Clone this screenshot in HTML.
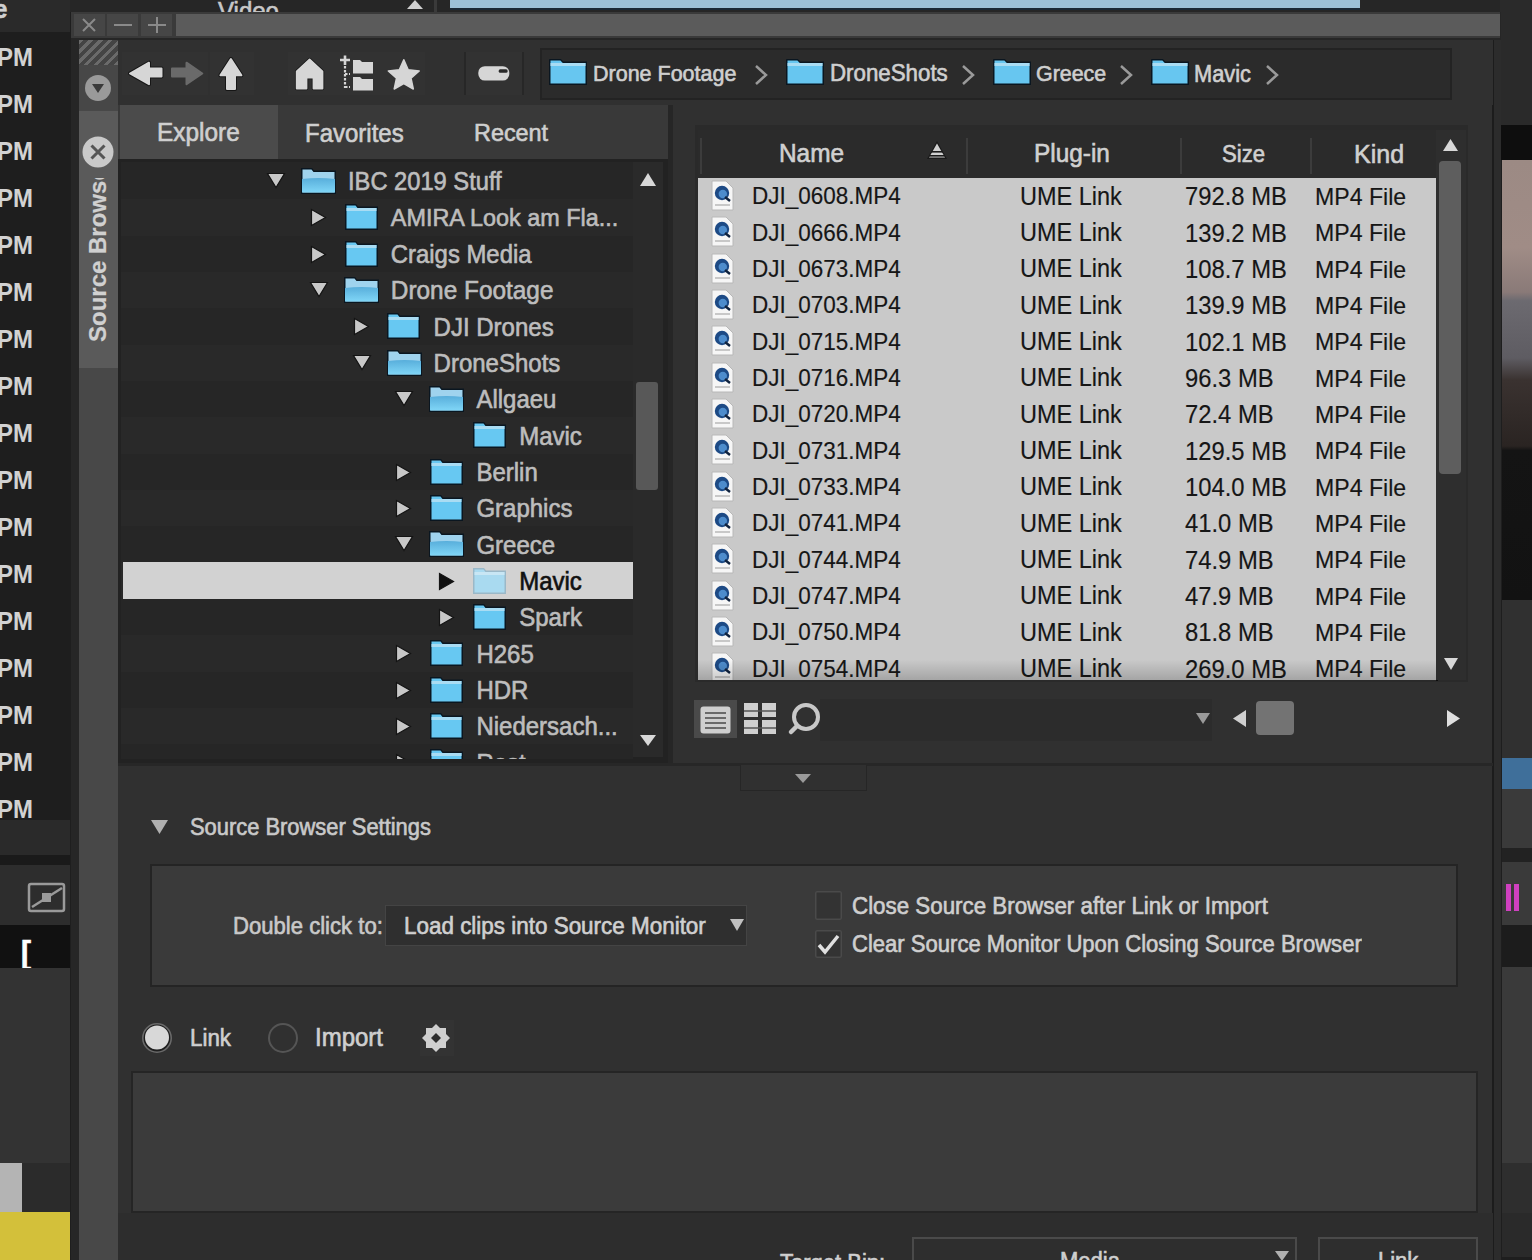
<!DOCTYPE html>
<html><head><meta charset="utf-8"><style>
html,body{margin:0;padding:0;width:1532px;height:1260px;overflow:hidden;background:#1e1e1e}
body{position:relative;font-family:"Liberation Sans",sans-serif}
div{position:absolute}
.t{white-space:nowrap;line-height:1;-webkit-text-stroke:0.6px currentColor;transform:scaleY(1.06);transform-origin:0 84.65%}
.d{-webkit-text-stroke:0.15px currentColor}
</style></head><body>
<div style="left:0px;top:0px;width:1532px;height:1260px;background:#1e1e1e"></div>
<div style="left:0px;top:0px;width:1532px;height:12px;background:#262626"></div>
<div style="left:0px;top:0px;width:70px;height:32px;background:#2a2a2a"></div>
<div class="t " style="left:-6px;top:-2.32px;font-size:24px;color:#d0d0d0;font-weight:bold">e</div>
<div class="t " style="left:-3px;top:46.48px;font-size:24px;color:#d2d2d2;font-weight:bold;-webkit-text-stroke:0">PM</div>
<div class="t " style="left:-3px;top:93.48px;font-size:24px;color:#d2d2d2;font-weight:bold;-webkit-text-stroke:0">PM</div>
<div class="t " style="left:-3px;top:140.48px;font-size:24px;color:#d2d2d2;font-weight:bold;-webkit-text-stroke:0">PM</div>
<div class="t " style="left:-3px;top:187.48px;font-size:24px;color:#d2d2d2;font-weight:bold;-webkit-text-stroke:0">PM</div>
<div class="t " style="left:-3px;top:234.48px;font-size:24px;color:#d2d2d2;font-weight:bold;-webkit-text-stroke:0">PM</div>
<div class="t " style="left:-3px;top:281.48px;font-size:24px;color:#d2d2d2;font-weight:bold;-webkit-text-stroke:0">PM</div>
<div class="t " style="left:-3px;top:328.48px;font-size:24px;color:#d2d2d2;font-weight:bold;-webkit-text-stroke:0">PM</div>
<div class="t " style="left:-3px;top:375.48px;font-size:24px;color:#d2d2d2;font-weight:bold;-webkit-text-stroke:0">PM</div>
<div class="t " style="left:-3px;top:422.48px;font-size:24px;color:#d2d2d2;font-weight:bold;-webkit-text-stroke:0">PM</div>
<div class="t " style="left:-3px;top:469.48px;font-size:24px;color:#d2d2d2;font-weight:bold;-webkit-text-stroke:0">PM</div>
<div class="t " style="left:-3px;top:516.48px;font-size:24px;color:#d2d2d2;font-weight:bold;-webkit-text-stroke:0">PM</div>
<div class="t " style="left:-3px;top:563.48px;font-size:24px;color:#d2d2d2;font-weight:bold;-webkit-text-stroke:0">PM</div>
<div class="t " style="left:-3px;top:610.48px;font-size:24px;color:#d2d2d2;font-weight:bold;-webkit-text-stroke:0">PM</div>
<div class="t " style="left:-3px;top:657.48px;font-size:24px;color:#d2d2d2;font-weight:bold;-webkit-text-stroke:0">PM</div>
<div class="t " style="left:-3px;top:704.48px;font-size:24px;color:#d2d2d2;font-weight:bold;-webkit-text-stroke:0">PM</div>
<div class="t " style="left:-3px;top:751.48px;font-size:24px;color:#d2d2d2;font-weight:bold;-webkit-text-stroke:0">PM</div>
<div class="t " style="left:-3px;top:798.48px;font-size:24px;color:#d2d2d2;font-weight:bold;-webkit-text-stroke:0">PM</div>
<div style="left:0px;top:820px;width:70px;height:35px;background:#2a2a2a"></div>
<div style="left:0px;top:855px;width:70px;height:10px;background:#1a1a1a"></div>
<div style="left:0px;top:865px;width:70px;height:60px;background:#2d2d2d"></div>
<div style="left:0px;top:925px;width:70px;height:43px;background:#111111"></div>
<div class="t " style="left:21px;top:937.61px;font-size:30px;color:#ffffff;font-weight:bold">[</div>
<div style="left:0px;top:968px;width:70px;height:195px;background:#333333"></div>
<div style="left:0px;top:1163px;width:70px;height:50px;background:#2b2b2b"></div>
<div style="left:0px;top:1163px;width:22px;height:49px;background:#b4b4b4"></div>
<div style="left:0px;top:1212px;width:70px;height:48px;background:#d3c03a"></div>
<svg style="position:absolute;left:26px;top:880px;" width="42" height="36" viewBox="0 0 42 36"><rect x="3" y="4" width="35" height="27" rx="2" fill="none" stroke="#9a9a9a" stroke-width="2.5"/><line x1="6" y1="27" x2="36" y2="8" stroke="#9a9a9a" stroke-width="2.5"/><rect x="16" y="13" width="9" height="9" fill="#9a9a9a"/></svg>
<div class="t " style="left:218px;top:-0.32px;font-size:24px;color:#c8c8c8;">Video</div>
<svg style="position:absolute;left:406px;top:0px;" width="18" height="10" viewBox="0 0 18 10"><polygon points="1,9 17,9 9,0" fill="#d0d0d0"/></svg>
<div style="left:434px;top:0px;width:3px;height:12px;background:#3a3a3a"></div>
<div style="left:450px;top:0px;width:910px;height:10px;background:#9cc2d6;box-shadow:inset 0 -2px 0 #1a2a34"></div>
<div style="left:1500px;top:0px;width:32px;height:125px;background:#2a2a2a"></div>
<div style="left:1500px;top:125px;width:32px;height:35px;background:#0e0e0e"></div>
<div style="left:1502px;top:160px;width:30px;height:440px;background:linear-gradient(#9c8a84 0%,#a08c86 20%,#8a7a78 30%,#6c6a70 32%,#5e5c62 45%,#3a3230 50%,#2a2422 65%,#141414 66%,#121212 100%)"></div>
<div style="left:1502px;top:600px;width:30px;height:158px;background:#303030"></div>
<div style="left:1502px;top:758px;width:30px;height:31px;background:#3f6f9a"></div>
<div style="left:1502px;top:789px;width:30px;height:59px;background:#3a3a3a"></div>
<div style="left:1502px;top:848px;width:30px;height:14px;background:#222"></div>
<div style="left:1502px;top:862px;width:30px;height:63px;background:#3a3a3a"></div>
<div style="left:1506px;top:884px;width:5px;height:27px;background:#d040c0"></div>
<div style="left:1514px;top:884px;width:5px;height:27px;background:#d040c0"></div>
<div style="left:1502px;top:925px;width:30px;height:42px;background:#1c1c1c"></div>
<div style="left:1502px;top:967px;width:30px;height:196px;background:#3a3a3a"></div>
<div style="left:1502px;top:1163px;width:30px;height:50px;background:#2e2e2e"></div>
<div style="left:1502px;top:1213px;width:30px;height:44px;background:#2a2a2a"></div>
<div style="left:71px;top:12px;width:1430px;height:1248px;background:#262626"></div>
<div style="left:71px;top:12px;width:1429px;height:26px;background:#3a3a3a"></div>
<div style="left:176px;top:14px;width:1324px;height:22px;background:#5b5b5b"></div>
<div style="left:74px;top:14px;width:31px;height:22px;background:#464646"></div>
<div style="left:107px;top:14px;width:31px;height:22px;background:#464646"></div>
<div style="left:141px;top:14px;width:31px;height:22px;background:#464646"></div>
<svg style="position:absolute;left:78px;top:15px;" width="22" height="20" viewBox="0 0 22 20"><path d="M5,4 L17,16 M17,4 L5,16" stroke="#8a8a8a" stroke-width="2"/></svg>
<svg style="position:absolute;left:110px;top:15px;" width="26" height="20" viewBox="0 0 26 20"><path d="M4,10 L22,10" stroke="#8a8a8a" stroke-width="2"/></svg>
<svg style="position:absolute;left:144px;top:15px;" width="26" height="20" viewBox="0 0 26 20"><path d="M4,10 L22,10 M13,2 L13,18" stroke="#8a8a8a" stroke-width="2"/></svg>
<div style="left:79px;top:40px;width:39px;height:1220px;background:#484848"></div>
<div style="left:79px;top:40px;width:39px;height:25px;background:repeating-linear-gradient(135deg,#6a6a6a 0 3px,#444 3px 7px)"></div>
<div style="left:79px;top:65px;width:39px;height:45px;background:#474747"></div>
<svg style="position:absolute;left:84px;top:74px;" width="28" height="28" viewBox="0 0 28 28"><circle cx="14" cy="14" r="13" fill="#9a9a9a"/><polygon points="8,10 20,10 14,19" fill="#3a3a3a"/></svg>
<div style="left:79px;top:111px;width:39px;height:257px;background:#5a5a5a"></div>
<svg style="position:absolute;left:82px;top:136px;" width="32" height="32" viewBox="0 0 32 32"><circle cx="16" cy="16" r="15.5" fill="#c9c9c9"/><path d="M9.5,9.5 L22.5,22.5 M22.5,9.5 L9.5,22.5" stroke="#555" stroke-width="3"/></svg>
<div style="left:79px;top:178px;width:39px;height:170px;overflow:hidden"><div class="t" style="left:7px;top:164px;font-size:24px;color:#d0d0d0;font-weight:bold;-webkit-text-stroke:0.2px currentColor;transform-origin:0 0;transform:rotate(-90deg);">Source Browser</div></div>
<div style="left:118px;top:40px;width:1375px;height:1220px;background:#303030"></div>
<div style="left:1492px;top:40px;width:2px;height:1220px;background:#1c1c1c"></div>
<div style="left:1494px;top:40px;width:7px;height:1220px;background:#2c2c2c"></div>
<div style="left:118px;top:40px;width:1375px;height:65px;background:#303030"></div>
<div style="left:122px;top:52px;width:44px;height:43px;background:#323232"></div>
<div style="left:166px;top:52px;width:42px;height:43px;background:#323232"></div>
<div style="left:210px;top:52px;width:44px;height:43px;background:#323232"></div>
<div style="left:288px;top:52px;width:137px;height:43px;background:#323232"></div>
<div style="left:465px;top:52px;width:58px;height:43px;background:#323232"></div>
<div style="left:464px;top:52px;width:2px;height:43px;background:#272727"></div>
<div style="left:522px;top:52px;width:2px;height:43px;background:#272727"></div>
<svg style="position:absolute;left:126px;top:58px;" width="40" height="32" viewBox="0 0 40 32"><path d="M4,15.5 L23,4.7 L23,10.5 L35.5,10.5 L35.5,18.4 L23,18.4 L23,26.2 Z" fill="#d6d6d6" stroke="#161616" stroke-width="4" stroke-linejoin="round"/><path d="M4,15.5 L23,4.7 L23,10.5 L35.5,10.5 L35.5,18.4 L23,18.4 L23,26.2 Z" fill="#d6d6d6" stroke="#d6d6d6" stroke-width="2" stroke-linejoin="round"/></svg>
<svg style="position:absolute;left:168px;top:58px;" width="38" height="32" viewBox="0 0 38 32"><path d="M34.3,15.5 L18.5,4.7 L18.5,10.5 L4,10.5 L4,18.4 L18.5,18.4 L18.5,26.2 Z" fill="#6a6a6a" stroke="#6a6a6a" stroke-width="2" stroke-linejoin="round"/></svg>
<svg style="position:absolute;left:216px;top:56px;" width="30" height="36" viewBox="0 0 30 36"><path d="M14.9,3 L25.4,19.3 L19,19.3 L19,33 L11,33 L11,19.3 L4.4,19.3 Z" fill="#d6d6d6" stroke="#161616" stroke-width="4" stroke-linejoin="round"/><path d="M14.9,3 L25.4,19.3 L19,19.3 L19,33 L11,33 L11,19.3 L4.4,19.3 Z" fill="#d6d6d6" stroke="#d6d6d6" stroke-width="2" stroke-linejoin="round"/></svg>
<svg style="position:absolute;left:293px;top:56px;" width="34" height="36" viewBox="0 0 34 36"><path d="M16.6,3.5 L29.5,15.5 L29.5,32.5 L20.5,32.5 L20.5,21.6 L13.5,21.6 L13.5,32.5 L3.7,32.5 L3.7,15.5 Z" fill="#d6d6d6" stroke="#161616" stroke-width="3.5" stroke-linejoin="round"/><path d="M16.6,3.5 L29.5,15.5 L29.5,32.5 L20.5,32.5 L20.5,21.6 L13.5,21.6 L13.5,32.5 L3.7,32.5 L3.7,15.5 Z" fill="#d6d6d6" stroke="#d6d6d6" stroke-width="1.8" stroke-linejoin="round"/></svg>
<svg style="position:absolute;left:338px;top:54px;" width="38" height="38" viewBox="0 0 38 38"><path d="M7,1.5 L7,11 M2,6 L12,6" stroke="#d6d6d6" stroke-width="2.6"/><path d="M7,12 L7,34 M7,20 L12,20 M7,33 L12,33" stroke="#d6d6d6" stroke-width="2.2" stroke-dasharray="2.5 1.5" fill="none"/><path d="M15,6 L22,6 L24,8 L35,8 L35,19.5 L15,19.5 Z" fill="#d6d6d6"/><path d="M15,23 L22,23 L24,25 L35,25 L35,36.4 L15,36.4 Z" fill="#d6d6d6"/></svg>
<svg style="position:absolute;left:386px;top:56px;" width="36" height="36" viewBox="0 0 36 36"><polygon points="17.8,3.7 22.2,13.8 33.2,14.9 25.0,22.2 27.3,33.0 17.8,27.5 8.2,33.0 10.5,22.2 2.3,14.9 13.3,13.8" fill="#d6d6d6" stroke="#d6d6d6" stroke-width="1.5" stroke-linejoin="round"/></svg>
<svg style="position:absolute;left:476px;top:64px;" width="36" height="20" viewBox="0 0 36 20"><rect x="2.3" y="2.2" width="31" height="14.4" rx="6.5" fill="#d6d6d6"/><rect x="22.7" y="5.3" width="8.9" height="3.4" rx="1.5" fill="#2a2a2a"/></svg>
<div style="left:540px;top:48px;width:912px;height:52px;background:#2b2b2b;box-shadow:inset 0 0 0 2px #232323"></div>
<svg width="0" height="0" style="position:absolute"><defs><linearGradient id="fg" x1="0" y1="0" x2="0" y2="1"><stop offset="0" stop-color="#58aedb"/><stop offset="1" stop-color="#80d6f7"/></linearGradient></defs></svg>
<svg style="position:absolute;left:548px;top:58px;" width="40" height="28" viewBox="0 0 40 28"><path d="M1,27 L1,2 Q1,1 2,1 L12.8,1 L15.2,3.5 L39,3.5 L39,27 Z" fill="#0a1620"/><path d="M2.5,25.5 L2.5,2.5 L12.4,2.5 L14.8,5 L37.5,5 L37.5,25.5 Z" fill="#67c6f0"/><rect x="2.5" y="5" width="35" height="3" fill="#a9dcf3"/></svg>
<div class="t " style="left:593px;top:64.10px;font-size:21.5px;color:#cfcfcf;">Drone Footage</div>
<svg style="position:absolute;left:754px;top:64px;" width="14" height="22" viewBox="0 0 14 22"><path d="M2,2 L12,11 L2,20" stroke="#9a9a9a" stroke-width="2.5" fill="none"/></svg>
<svg style="position:absolute;left:785px;top:58px;" width="40" height="28" viewBox="0 0 40 28"><path d="M1,27 L1,2 Q1,1 2,1 L12.8,1 L15.2,3.5 L39,3.5 L39,27 Z" fill="#0a1620"/><path d="M2.5,25.5 L2.5,2.5 L12.4,2.5 L14.8,5 L37.5,5 L37.5,25.5 Z" fill="#67c6f0"/><rect x="2.5" y="5" width="35" height="3" fill="#a9dcf3"/></svg>
<div class="t " style="left:830px;top:63.42px;font-size:22.3px;color:#cfcfcf;">DroneShots</div>
<svg style="position:absolute;left:961px;top:64px;" width="14" height="22" viewBox="0 0 14 22"><path d="M2,2 L12,11 L2,20" stroke="#9a9a9a" stroke-width="2.5" fill="none"/></svg>
<svg style="position:absolute;left:992px;top:58px;" width="40" height="28" viewBox="0 0 40 28"><path d="M1,27 L1,2 Q1,1 2,1 L12.8,1 L15.2,3.5 L39,3.5 L39,27 Z" fill="#0a1620"/><path d="M2.5,25.5 L2.5,2.5 L12.4,2.5 L14.8,5 L37.5,5 L37.5,25.5 Z" fill="#67c6f0"/><rect x="2.5" y="5" width="35" height="3" fill="#a9dcf3"/></svg>
<div class="t " style="left:1036px;top:64.18px;font-size:21.4px;color:#cfcfcf;">Greece</div>
<svg style="position:absolute;left:1119px;top:64px;" width="14" height="22" viewBox="0 0 14 22"><path d="M2,2 L12,11 L2,20" stroke="#9a9a9a" stroke-width="2.5" fill="none"/></svg>
<svg style="position:absolute;left:1150px;top:58px;" width="40" height="28" viewBox="0 0 40 28"><path d="M1,27 L1,2 Q1,1 2,1 L12.8,1 L15.2,3.5 L39,3.5 L39,27 Z" fill="#0a1620"/><path d="M2.5,25.5 L2.5,2.5 L12.4,2.5 L14.8,5 L37.5,5 L37.5,25.5 Z" fill="#67c6f0"/><rect x="2.5" y="5" width="35" height="3" fill="#a9dcf3"/></svg>
<div class="t " style="left:1194px;top:63.85px;font-size:21.8px;color:#cfcfcf;">Mavic</div>
<svg style="position:absolute;left:1265px;top:64px;" width="14" height="22" viewBox="0 0 14 22"><path d="M2,2 L12,11 L2,20" stroke="#9a9a9a" stroke-width="2.5" fill="none"/></svg>
<div style="left:118px;top:105px;width:553px;height:54px;background:#393939"></div>
<div style="left:120px;top:105px;width:158px;height:54px;background:#4b4b4b"></div>
<div class="t " style="left:157px;top:121.35px;font-size:24.4px;color:#cfcfcf;">Explore</div>
<div class="t " style="left:305px;top:121.68px;font-size:24px;color:#cfcfcf;">Favorites</div>
<div class="t " style="left:474px;top:122.19px;font-size:23.4px;color:#cfcfcf;">Recent</div>
<div style="left:668px;top:105px;width:5px;height:660px;background:#262626"></div>
<div style="left:118px;top:159px;width:550px;height:604px;background:#222222"></div>
<div style="left:121px;top:162px;width:512px;height:597px;overflow:hidden;background:#262626">
<svg style="position:absolute;left:145.0px;top:10.0px" width="20" height="17"><polygon points="1.5,1.5 18.5,1.5 10,15.5" fill="#c8c8c8" stroke="#141414" stroke-width="1.2"/></svg>
<svg style="position:absolute;left:179.0px;top:5.0px" width="37" height="28"><path d="M1,27 L1,1 L12,1 L14,3.5 L36,3.5 L36,27 Z" fill="#0a1620"/><path d="M2.5,25.5 L2.5,2.5 L11.5,2.5 L13.5,5 L34.5,5 L34.5,25.5 Z" fill="#9fd3ee"/><path d="M2,25.5 L2,12 Q18.5,10 35,12 L35,25.5 Z" fill="url(#fg)"/></svg>
<div class="t" style="left:227.0px;top:8.54px;font-size:23.7px;color:#bdbdbd">IBC 2019 Stuff</div>
<div style="left:0px;top:37.33px;width:512px;height:36.33px;background:#292929"></div>
<svg style="position:absolute;left:188.8px;top:46.3px" width="17" height="19"><polygon points="1.5,1.5 15.5,9.5 1.5,17.5" fill="#c8c8c8" stroke="#141414" stroke-width="1.2"/></svg>
<svg style="position:absolute;left:222.6px;top:41.3px" width="35" height="28"><path d="M1,27 L1,1 L12,1 L14,3.5 L34,3.5 L34,27 Z" fill="#0a1620"/><path d="M2.5,25.5 L2.5,2.5 L11.5,2.5 L13.5,5 L32.5,5 L32.5,25.5 Z" fill="#67c8f2"/><rect x="2.5" y="5" width="30" height="3" fill="#a9dcf3"/></svg>
<div class="t" style="left:269.8px;top:45.12px;font-size:23.4px;color:#bdbdbd">AMIRA Look am Fla...</div>
<svg style="position:absolute;left:188.8px;top:82.7px" width="17" height="19"><polygon points="1.5,1.5 15.5,9.5 1.5,17.5" fill="#c8c8c8" stroke="#141414" stroke-width="1.2"/></svg>
<svg style="position:absolute;left:222.6px;top:77.7px" width="35" height="28"><path d="M1,27 L1,1 L12,1 L14,3.5 L34,3.5 L34,27 Z" fill="#0a1620"/><path d="M2.5,25.5 L2.5,2.5 L11.5,2.5 L13.5,5 L32.5,5 L32.5,25.5 Z" fill="#67c8f2"/><rect x="2.5" y="5" width="30" height="3" fill="#a9dcf3"/></svg>
<div class="t" style="left:269.8px;top:81.03px;font-size:23.9px;color:#bdbdbd">Craigs Media</div>
<div style="left:0px;top:109.99px;width:512px;height:36.33px;background:#292929"></div>
<svg style="position:absolute;left:187.8px;top:119.0px" width="20" height="17"><polygon points="1.5,1.5 18.5,1.5 10,15.5" fill="#c8c8c8" stroke="#141414" stroke-width="1.2"/></svg>
<svg style="position:absolute;left:221.8px;top:114.0px" width="37" height="28"><path d="M1,27 L1,1 L12,1 L14,3.5 L36,3.5 L36,27 Z" fill="#0a1620"/><path d="M2.5,25.5 L2.5,2.5 L11.5,2.5 L13.5,5 L34.5,5 L34.5,25.5 Z" fill="#9fd3ee"/><path d="M2,25.5 L2,12 Q18.5,10 35,12 L35,25.5 Z" fill="url(#fg)"/></svg>
<div class="t" style="left:269.8px;top:116.94px;font-size:24.4px;color:#bdbdbd">Drone Footage</div>
<svg style="position:absolute;left:231.6px;top:155.3px" width="17" height="19"><polygon points="1.5,1.5 15.5,9.5 1.5,17.5" fill="#c8c8c8" stroke="#141414" stroke-width="1.2"/></svg>
<svg style="position:absolute;left:265.4px;top:150.3px" width="35" height="28"><path d="M1,27 L1,1 L12,1 L14,3.5 L34,3.5 L34,27 Z" fill="#0a1620"/><path d="M2.5,25.5 L2.5,2.5 L11.5,2.5 L13.5,5 L32.5,5 L32.5,25.5 Z" fill="#67c8f2"/><rect x="2.5" y="5" width="30" height="3" fill="#a9dcf3"/></svg>
<div class="t" style="left:312.6px;top:153.60px;font-size:24px;color:#bdbdbd">DJI Drones</div>
<div style="left:0px;top:182.65px;width:512px;height:36.33px;background:#292929"></div>
<svg style="position:absolute;left:230.6px;top:191.6px" width="20" height="17"><polygon points="1.5,1.5 18.5,1.5 10,15.5" fill="#c8c8c8" stroke="#141414" stroke-width="1.2"/></svg>
<svg style="position:absolute;left:264.6px;top:186.6px" width="37" height="28"><path d="M1,27 L1,1 L12,1 L14,3.5 L36,3.5 L36,27 Z" fill="#0a1620"/><path d="M2.5,25.5 L2.5,2.5 L11.5,2.5 L13.5,5 L34.5,5 L34.5,25.5 Z" fill="#9fd3ee"/><path d="M2,25.5 L2,12 Q18.5,10 35,12 L35,25.5 Z" fill="url(#fg)"/></svg>
<div class="t" style="left:312.6px;top:189.93px;font-size:24px;color:#bdbdbd">DroneShots</div>
<svg style="position:absolute;left:273.4px;top:228.0px" width="20" height="17"><polygon points="1.5,1.5 18.5,1.5 10,15.5" fill="#c8c8c8" stroke="#141414" stroke-width="1.2"/></svg>
<svg style="position:absolute;left:307.4px;top:223.0px" width="37" height="28"><path d="M1,27 L1,1 L12,1 L14,3.5 L36,3.5 L36,27 Z" fill="#0a1620"/><path d="M2.5,25.5 L2.5,2.5 L11.5,2.5 L13.5,5 L34.5,5 L34.5,25.5 Z" fill="#9fd3ee"/><path d="M2,25.5 L2,12 Q18.5,10 35,12 L35,25.5 Z" fill="url(#fg)"/></svg>
<div class="t" style="left:355.4px;top:226.26px;font-size:24px;color:#bdbdbd">Allgaeu</div>
<div style="left:0px;top:255.31px;width:512px;height:36.33px;background:#292929"></div>
<svg style="position:absolute;left:351.0px;top:259.3px" width="35" height="28"><path d="M1,27 L1,1 L12,1 L14,3.5 L34,3.5 L34,27 Z" fill="#0a1620"/><path d="M2.5,25.5 L2.5,2.5 L11.5,2.5 L13.5,5 L32.5,5 L32.5,25.5 Z" fill="#67c8f2"/><rect x="2.5" y="5" width="30" height="3" fill="#a9dcf3"/></svg>
<div class="t" style="left:398.2px;top:262.59px;font-size:24px;color:#bdbdbd">Mavic</div>
<svg style="position:absolute;left:274.4px;top:300.6px" width="17" height="19"><polygon points="1.5,1.5 15.5,9.5 1.5,17.5" fill="#c8c8c8" stroke="#141414" stroke-width="1.2"/></svg>
<svg style="position:absolute;left:308.2px;top:295.6px" width="35" height="28"><path d="M1,27 L1,1 L12,1 L14,3.5 L34,3.5 L34,27 Z" fill="#0a1620"/><path d="M2.5,25.5 L2.5,2.5 L11.5,2.5 L13.5,5 L32.5,5 L32.5,25.5 Z" fill="#67c8f2"/><rect x="2.5" y="5" width="30" height="3" fill="#a9dcf3"/></svg>
<div class="t" style="left:355.4px;top:298.92px;font-size:24px;color:#bdbdbd">Berlin</div>
<div style="left:0px;top:327.97px;width:512px;height:36.33px;background:#292929"></div>
<svg style="position:absolute;left:274.4px;top:337.0px" width="17" height="19"><polygon points="1.5,1.5 15.5,9.5 1.5,17.5" fill="#c8c8c8" stroke="#141414" stroke-width="1.2"/></svg>
<svg style="position:absolute;left:308.2px;top:332.0px" width="35" height="28"><path d="M1,27 L1,1 L12,1 L14,3.5 L34,3.5 L34,27 Z" fill="#0a1620"/><path d="M2.5,25.5 L2.5,2.5 L11.5,2.5 L13.5,5 L32.5,5 L32.5,25.5 Z" fill="#67c8f2"/><rect x="2.5" y="5" width="30" height="3" fill="#a9dcf3"/></svg>
<div class="t" style="left:355.4px;top:335.25px;font-size:24px;color:#bdbdbd">Graphics</div>
<svg style="position:absolute;left:273.4px;top:373.3px" width="20" height="17"><polygon points="1.5,1.5 18.5,1.5 10,15.5" fill="#c8c8c8" stroke="#141414" stroke-width="1.2"/></svg>
<svg style="position:absolute;left:307.4px;top:368.3px" width="37" height="28"><path d="M1,27 L1,1 L12,1 L14,3.5 L36,3.5 L36,27 Z" fill="#0a1620"/><path d="M2.5,25.5 L2.5,2.5 L11.5,2.5 L13.5,5 L34.5,5 L34.5,25.5 Z" fill="#9fd3ee"/><path d="M2,25.5 L2,12 Q18.5,10 35,12 L35,25.5 Z" fill="url(#fg)"/></svg>
<div class="t" style="left:355.4px;top:371.58px;font-size:24px;color:#bdbdbd">Greece</div>
<div style="left:0px;top:400.63px;width:512px;height:36.33px;background:#292929"></div>
<div style="left:2px;top:400.13px;width:510px;height:37px;background:#d2d2d2"></div>
<svg style="position:absolute;left:317.2px;top:409.6px" width="17" height="19"><polygon points="1.5,1.5 15.5,9.5 1.5,17.5" fill="#111" stroke="#141414" stroke-width="1.2"/></svg>
<svg style="position:absolute;left:351.0px;top:404.6px" width="35" height="28"><path d="M1,27 L1,1 L12,1 L14,3.5 L34,3.5 L34,27 Z" fill="#9ab8c8"/><path d="M2.5,25.5 L2.5,2.5 L11.5,2.5 L13.5,5 L32.5,5 L32.5,25.5 Z" fill="#a9daf0"/><rect x="2.5" y="5" width="30" height="3" fill="#c8e6f4"/></svg>
<div class="t" style="left:398.2px;top:407.91px;font-size:24px;color:#111">Mavic</div>
<svg style="position:absolute;left:317.2px;top:446.0px" width="17" height="19"><polygon points="1.5,1.5 15.5,9.5 1.5,17.5" fill="#c8c8c8" stroke="#141414" stroke-width="1.2"/></svg>
<svg style="position:absolute;left:351.0px;top:441.0px" width="35" height="28"><path d="M1,27 L1,1 L12,1 L14,3.5 L34,3.5 L34,27 Z" fill="#0a1620"/><path d="M2.5,25.5 L2.5,2.5 L11.5,2.5 L13.5,5 L32.5,5 L32.5,25.5 Z" fill="#67c8f2"/><rect x="2.5" y="5" width="30" height="3" fill="#a9dcf3"/></svg>
<div class="t" style="left:398.2px;top:444.24px;font-size:24px;color:#bdbdbd">Spark</div>
<div style="left:0px;top:473.29px;width:512px;height:36.33px;background:#292929"></div>
<svg style="position:absolute;left:274.4px;top:482.3px" width="17" height="19"><polygon points="1.5,1.5 15.5,9.5 1.5,17.5" fill="#c8c8c8" stroke="#141414" stroke-width="1.2"/></svg>
<svg style="position:absolute;left:308.2px;top:477.3px" width="35" height="28"><path d="M1,27 L1,1 L12,1 L14,3.5 L34,3.5 L34,27 Z" fill="#0a1620"/><path d="M2.5,25.5 L2.5,2.5 L11.5,2.5 L13.5,5 L32.5,5 L32.5,25.5 Z" fill="#67c8f2"/><rect x="2.5" y="5" width="30" height="3" fill="#a9dcf3"/></svg>
<div class="t" style="left:355.4px;top:480.57px;font-size:24px;color:#bdbdbd">H265</div>
<svg style="position:absolute;left:274.4px;top:518.6px" width="17" height="19"><polygon points="1.5,1.5 15.5,9.5 1.5,17.5" fill="#c8c8c8" stroke="#141414" stroke-width="1.2"/></svg>
<svg style="position:absolute;left:308.2px;top:513.6px" width="35" height="28"><path d="M1,27 L1,1 L12,1 L14,3.5 L34,3.5 L34,27 Z" fill="#0a1620"/><path d="M2.5,25.5 L2.5,2.5 L11.5,2.5 L13.5,5 L32.5,5 L32.5,25.5 Z" fill="#67c8f2"/><rect x="2.5" y="5" width="30" height="3" fill="#a9dcf3"/></svg>
<div class="t" style="left:355.4px;top:516.90px;font-size:24px;color:#bdbdbd">HDR</div>
<div style="left:0px;top:545.95px;width:512px;height:36.33px;background:#292929"></div>
<svg style="position:absolute;left:274.4px;top:554.9px" width="17" height="19"><polygon points="1.5,1.5 15.5,9.5 1.5,17.5" fill="#c8c8c8" stroke="#141414" stroke-width="1.2"/></svg>
<svg style="position:absolute;left:308.2px;top:549.9px" width="35" height="28"><path d="M1,27 L1,1 L12,1 L14,3.5 L34,3.5 L34,27 Z" fill="#0a1620"/><path d="M2.5,25.5 L2.5,2.5 L11.5,2.5 L13.5,5 L32.5,5 L32.5,25.5 Z" fill="#67c8f2"/><rect x="2.5" y="5" width="30" height="3" fill="#a9dcf3"/></svg>
<div class="t" style="left:355.4px;top:553.23px;font-size:24px;color:#bdbdbd">Niedersach...</div>
<svg style="position:absolute;left:274.4px;top:591.3px" width="17" height="19"><polygon points="1.5,1.5 15.5,9.5 1.5,17.5" fill="#c8c8c8" stroke="#141414" stroke-width="1.2"/></svg>
<svg style="position:absolute;left:308.2px;top:586.3px" width="35" height="28"><path d="M1,27 L1,1 L12,1 L14,3.5 L34,3.5 L34,27 Z" fill="#0a1620"/><path d="M2.5,25.5 L2.5,2.5 L11.5,2.5 L13.5,5 L32.5,5 L32.5,25.5 Z" fill="#67c8f2"/><rect x="2.5" y="5" width="30" height="3" fill="#a9dcf3"/></svg>
<div class="t" style="left:355.4px;top:589.56px;font-size:24px;color:#bdbdbd">Rest</div>
</div>
<div style="left:633px;top:162px;width:30px;height:595px;background:#2a2a2a"></div>
<svg style="position:absolute;left:639px;top:172px;" width="18" height="15" viewBox="0 0 18 15"><polygon points="1,14 17,14 9,1" fill="#d8d8d8"/></svg>
<div style="left:636px;top:382px;width:22px;height:108px;background:#585858;border-radius:3px"></div>
<svg style="position:absolute;left:639px;top:734px;" width="18" height="13" viewBox="0 0 18 13"><polygon points="1,1 17,1 9,12" fill="#d8d8d8"/></svg>
<div style="left:695px;top:125px;width:773px;height:557px;background:#2a2a2a"></div>
<div style="left:698px;top:130px;width:740px;height:48px;background:#2b2b2b"></div>
<div class="t " style="left:779px;top:142.35px;font-size:24.4px;color:#d0d0d0;">Name</div>
<svg style="position:absolute;left:926px;top:140px;" width="22" height="20" viewBox="0 0 22 20"><polygon points="11,1 21,19 1,19" fill="#1a1a1a"/><polygon points="11,3.5 19,17.5 3,17.5" fill="#d0d0d0"/><rect x="5" y="11" width="12" height="1.6" fill="#1a1a1a"/><rect x="3" y="15" width="16" height="1.6" fill="#1a1a1a"/></svg>
<div style="left:700px;top:138px;width:2px;height:36px;background:#3c3c3c"></div>
<div style="left:966px;top:138px;width:2px;height:36px;background:#3c3c3c"></div>
<div style="left:1180px;top:138px;width:2px;height:36px;background:#3c3c3c"></div>
<div style="left:1310px;top:138px;width:2px;height:36px;background:#3c3c3c"></div>
<div class="t " style="left:1034px;top:142.35px;font-size:24.4px;color:#d0d0d0;">Plug-in</div>
<div class="t " style="left:1222px;top:144.29px;font-size:22.1px;color:#d0d0d0;">Size</div>
<div class="t " style="left:1354px;top:141.84px;font-size:25px;color:#d0d0d0;">Kind</div>
<div style="left:698px;top:178px;width:738px;height:502px;background:#c9c9c9"></div>
<div style="left:1436px;top:178px;width:2px;height:503px;background:#0c0c0c"></div>
<div style="left:698px;top:178px;width:738px;height:502px;overflow:hidden">
<svg style="position:absolute;left:13px;top:2.0px" width="23" height="31"><path d="M1,1 L15,1 L22,8 L22,30 L1,30 Z" fill="#f6f6f6" stroke="#b8b8b8" stroke-width="1"/><circle cx="11" cy="13" r="7.2" fill="#1d4a85"/><circle cx="11.8" cy="14" r="4.2" fill="#4d8ccc"/><path d="M14,17 L19,21" stroke="#10233f" stroke-width="2.5"/><rect x="4" y="24" width="15" height="2" fill="#c8c8c8"/></svg>
<div class="t d" style="left:54px;top:8.45px;font-size:22.5px;color:#161616">DJI_0608.MP4</div>
<div class="t d" style="left:322px;top:7.61px;font-size:23.5px;color:#161616">UME Link</div>
<div class="t d" style="left:487px;top:7.35px;font-size:23.8px;color:#161616">792.8 MB</div>
<div class="t d" style="left:617px;top:7.95px;font-size:23.1px;color:#161616">MP4 File</div>
<svg style="position:absolute;left:13px;top:38.3px" width="23" height="31"><path d="M1,1 L15,1 L22,8 L22,30 L1,30 Z" fill="#f6f6f6" stroke="#b8b8b8" stroke-width="1"/><circle cx="11" cy="13" r="7.2" fill="#1d4a85"/><circle cx="11.8" cy="14" r="4.2" fill="#4d8ccc"/><path d="M14,17 L19,21" stroke="#10233f" stroke-width="2.5"/><rect x="4" y="24" width="15" height="2" fill="#c8c8c8"/></svg>
<div class="t d" style="left:54px;top:44.78px;font-size:22.5px;color:#161616">DJI_0666.MP4</div>
<div class="t d" style="left:322px;top:43.94px;font-size:23.5px;color:#161616">UME Link</div>
<div class="t d" style="left:487px;top:43.68px;font-size:23.8px;color:#161616">139.2 MB</div>
<div class="t d" style="left:617px;top:44.28px;font-size:23.1px;color:#161616">MP4 File</div>
<svg style="position:absolute;left:13px;top:74.7px" width="23" height="31"><path d="M1,1 L15,1 L22,8 L22,30 L1,30 Z" fill="#f6f6f6" stroke="#b8b8b8" stroke-width="1"/><circle cx="11" cy="13" r="7.2" fill="#1d4a85"/><circle cx="11.8" cy="14" r="4.2" fill="#4d8ccc"/><path d="M14,17 L19,21" stroke="#10233f" stroke-width="2.5"/><rect x="4" y="24" width="15" height="2" fill="#c8c8c8"/></svg>
<div class="t d" style="left:54px;top:81.11px;font-size:22.5px;color:#161616">DJI_0673.MP4</div>
<div class="t d" style="left:322px;top:80.27px;font-size:23.5px;color:#161616">UME Link</div>
<div class="t d" style="left:487px;top:80.01px;font-size:23.8px;color:#161616">108.7 MB</div>
<div class="t d" style="left:617px;top:80.61px;font-size:23.1px;color:#161616">MP4 File</div>
<svg style="position:absolute;left:13px;top:111.0px" width="23" height="31"><path d="M1,1 L15,1 L22,8 L22,30 L1,30 Z" fill="#f6f6f6" stroke="#b8b8b8" stroke-width="1"/><circle cx="11" cy="13" r="7.2" fill="#1d4a85"/><circle cx="11.8" cy="14" r="4.2" fill="#4d8ccc"/><path d="M14,17 L19,21" stroke="#10233f" stroke-width="2.5"/><rect x="4" y="24" width="15" height="2" fill="#c8c8c8"/></svg>
<div class="t d" style="left:54px;top:117.44px;font-size:22.5px;color:#161616">DJI_0703.MP4</div>
<div class="t d" style="left:322px;top:116.60px;font-size:23.5px;color:#161616">UME Link</div>
<div class="t d" style="left:487px;top:116.34px;font-size:23.8px;color:#161616">139.9 MB</div>
<div class="t d" style="left:617px;top:116.94px;font-size:23.1px;color:#161616">MP4 File</div>
<svg style="position:absolute;left:13px;top:147.3px" width="23" height="31"><path d="M1,1 L15,1 L22,8 L22,30 L1,30 Z" fill="#f6f6f6" stroke="#b8b8b8" stroke-width="1"/><circle cx="11" cy="13" r="7.2" fill="#1d4a85"/><circle cx="11.8" cy="14" r="4.2" fill="#4d8ccc"/><path d="M14,17 L19,21" stroke="#10233f" stroke-width="2.5"/><rect x="4" y="24" width="15" height="2" fill="#c8c8c8"/></svg>
<div class="t d" style="left:54px;top:153.77px;font-size:22.5px;color:#161616">DJI_0715.MP4</div>
<div class="t d" style="left:322px;top:152.93px;font-size:23.5px;color:#161616">UME Link</div>
<div class="t d" style="left:487px;top:152.67px;font-size:23.8px;color:#161616">102.1 MB</div>
<div class="t d" style="left:617px;top:153.27px;font-size:23.1px;color:#161616">MP4 File</div>
<svg style="position:absolute;left:13px;top:183.6px" width="23" height="31"><path d="M1,1 L15,1 L22,8 L22,30 L1,30 Z" fill="#f6f6f6" stroke="#b8b8b8" stroke-width="1"/><circle cx="11" cy="13" r="7.2" fill="#1d4a85"/><circle cx="11.8" cy="14" r="4.2" fill="#4d8ccc"/><path d="M14,17 L19,21" stroke="#10233f" stroke-width="2.5"/><rect x="4" y="24" width="15" height="2" fill="#c8c8c8"/></svg>
<div class="t d" style="left:54px;top:190.10px;font-size:22.5px;color:#161616">DJI_0716.MP4</div>
<div class="t d" style="left:322px;top:189.26px;font-size:23.5px;color:#161616">UME Link</div>
<div class="t d" style="left:487px;top:189.00px;font-size:23.8px;color:#161616">96.3 MB</div>
<div class="t d" style="left:617px;top:189.60px;font-size:23.1px;color:#161616">MP4 File</div>
<svg style="position:absolute;left:13px;top:220.0px" width="23" height="31"><path d="M1,1 L15,1 L22,8 L22,30 L1,30 Z" fill="#f6f6f6" stroke="#b8b8b8" stroke-width="1"/><circle cx="11" cy="13" r="7.2" fill="#1d4a85"/><circle cx="11.8" cy="14" r="4.2" fill="#4d8ccc"/><path d="M14,17 L19,21" stroke="#10233f" stroke-width="2.5"/><rect x="4" y="24" width="15" height="2" fill="#c8c8c8"/></svg>
<div class="t d" style="left:54px;top:226.43px;font-size:22.5px;color:#161616">DJI_0720.MP4</div>
<div class="t d" style="left:322px;top:225.59px;font-size:23.5px;color:#161616">UME Link</div>
<div class="t d" style="left:487px;top:225.33px;font-size:23.8px;color:#161616">72.4 MB</div>
<div class="t d" style="left:617px;top:225.93px;font-size:23.1px;color:#161616">MP4 File</div>
<svg style="position:absolute;left:13px;top:256.3px" width="23" height="31"><path d="M1,1 L15,1 L22,8 L22,30 L1,30 Z" fill="#f6f6f6" stroke="#b8b8b8" stroke-width="1"/><circle cx="11" cy="13" r="7.2" fill="#1d4a85"/><circle cx="11.8" cy="14" r="4.2" fill="#4d8ccc"/><path d="M14,17 L19,21" stroke="#10233f" stroke-width="2.5"/><rect x="4" y="24" width="15" height="2" fill="#c8c8c8"/></svg>
<div class="t d" style="left:54px;top:262.76px;font-size:22.5px;color:#161616">DJI_0731.MP4</div>
<div class="t d" style="left:322px;top:261.92px;font-size:23.5px;color:#161616">UME Link</div>
<div class="t d" style="left:487px;top:261.66px;font-size:23.8px;color:#161616">129.5 MB</div>
<div class="t d" style="left:617px;top:262.26px;font-size:23.1px;color:#161616">MP4 File</div>
<svg style="position:absolute;left:13px;top:292.6px" width="23" height="31"><path d="M1,1 L15,1 L22,8 L22,30 L1,30 Z" fill="#f6f6f6" stroke="#b8b8b8" stroke-width="1"/><circle cx="11" cy="13" r="7.2" fill="#1d4a85"/><circle cx="11.8" cy="14" r="4.2" fill="#4d8ccc"/><path d="M14,17 L19,21" stroke="#10233f" stroke-width="2.5"/><rect x="4" y="24" width="15" height="2" fill="#c8c8c8"/></svg>
<div class="t d" style="left:54px;top:299.09px;font-size:22.5px;color:#161616">DJI_0733.MP4</div>
<div class="t d" style="left:322px;top:298.25px;font-size:23.5px;color:#161616">UME Link</div>
<div class="t d" style="left:487px;top:297.99px;font-size:23.8px;color:#161616">104.0 MB</div>
<div class="t d" style="left:617px;top:298.59px;font-size:23.1px;color:#161616">MP4 File</div>
<svg style="position:absolute;left:13px;top:329.0px" width="23" height="31"><path d="M1,1 L15,1 L22,8 L22,30 L1,30 Z" fill="#f6f6f6" stroke="#b8b8b8" stroke-width="1"/><circle cx="11" cy="13" r="7.2" fill="#1d4a85"/><circle cx="11.8" cy="14" r="4.2" fill="#4d8ccc"/><path d="M14,17 L19,21" stroke="#10233f" stroke-width="2.5"/><rect x="4" y="24" width="15" height="2" fill="#c8c8c8"/></svg>
<div class="t d" style="left:54px;top:335.42px;font-size:22.5px;color:#161616">DJI_0741.MP4</div>
<div class="t d" style="left:322px;top:334.58px;font-size:23.5px;color:#161616">UME Link</div>
<div class="t d" style="left:487px;top:334.32px;font-size:23.8px;color:#161616">41.0 MB</div>
<div class="t d" style="left:617px;top:334.92px;font-size:23.1px;color:#161616">MP4 File</div>
<svg style="position:absolute;left:13px;top:365.3px" width="23" height="31"><path d="M1,1 L15,1 L22,8 L22,30 L1,30 Z" fill="#f6f6f6" stroke="#b8b8b8" stroke-width="1"/><circle cx="11" cy="13" r="7.2" fill="#1d4a85"/><circle cx="11.8" cy="14" r="4.2" fill="#4d8ccc"/><path d="M14,17 L19,21" stroke="#10233f" stroke-width="2.5"/><rect x="4" y="24" width="15" height="2" fill="#c8c8c8"/></svg>
<div class="t d" style="left:54px;top:371.75px;font-size:22.5px;color:#161616">DJI_0744.MP4</div>
<div class="t d" style="left:322px;top:370.91px;font-size:23.5px;color:#161616">UME Link</div>
<div class="t d" style="left:487px;top:370.65px;font-size:23.8px;color:#161616">74.9 MB</div>
<div class="t d" style="left:617px;top:371.25px;font-size:23.1px;color:#161616">MP4 File</div>
<svg style="position:absolute;left:13px;top:401.6px" width="23" height="31"><path d="M1,1 L15,1 L22,8 L22,30 L1,30 Z" fill="#f6f6f6" stroke="#b8b8b8" stroke-width="1"/><circle cx="11" cy="13" r="7.2" fill="#1d4a85"/><circle cx="11.8" cy="14" r="4.2" fill="#4d8ccc"/><path d="M14,17 L19,21" stroke="#10233f" stroke-width="2.5"/><rect x="4" y="24" width="15" height="2" fill="#c8c8c8"/></svg>
<div class="t d" style="left:54px;top:408.08px;font-size:22.5px;color:#161616">DJI_0747.MP4</div>
<div class="t d" style="left:322px;top:407.24px;font-size:23.5px;color:#161616">UME Link</div>
<div class="t d" style="left:487px;top:406.98px;font-size:23.8px;color:#161616">47.9 MB</div>
<div class="t d" style="left:617px;top:407.58px;font-size:23.1px;color:#161616">MP4 File</div>
<svg style="position:absolute;left:13px;top:438.0px" width="23" height="31"><path d="M1,1 L15,1 L22,8 L22,30 L1,30 Z" fill="#f6f6f6" stroke="#b8b8b8" stroke-width="1"/><circle cx="11" cy="13" r="7.2" fill="#1d4a85"/><circle cx="11.8" cy="14" r="4.2" fill="#4d8ccc"/><path d="M14,17 L19,21" stroke="#10233f" stroke-width="2.5"/><rect x="4" y="24" width="15" height="2" fill="#c8c8c8"/></svg>
<div class="t d" style="left:54px;top:444.41px;font-size:22.5px;color:#161616">DJI_0750.MP4</div>
<div class="t d" style="left:322px;top:443.57px;font-size:23.5px;color:#161616">UME Link</div>
<div class="t d" style="left:487px;top:443.31px;font-size:23.8px;color:#161616">81.8 MB</div>
<div class="t d" style="left:617px;top:443.91px;font-size:23.1px;color:#161616">MP4 File</div>
<svg style="position:absolute;left:13px;top:474.3px" width="23" height="31"><path d="M1,1 L15,1 L22,8 L22,30 L1,30 Z" fill="#f6f6f6" stroke="#b8b8b8" stroke-width="1"/><circle cx="11" cy="13" r="7.2" fill="#1d4a85"/><circle cx="11.8" cy="14" r="4.2" fill="#4d8ccc"/><path d="M14,17 L19,21" stroke="#10233f" stroke-width="2.5"/><rect x="4" y="24" width="15" height="2" fill="#c8c8c8"/></svg>
<div class="t d" style="left:54px;top:480.74px;font-size:22.5px;color:#161616">DJI_0754.MP4</div>
<div class="t d" style="left:322px;top:479.90px;font-size:23.5px;color:#161616">UME Link</div>
<div class="t d" style="left:487px;top:479.64px;font-size:23.8px;color:#161616">269.0 MB</div>
<div class="t d" style="left:617px;top:480.24px;font-size:23.1px;color:#161616">MP4 File</div>
<div style="left:0;top:482px;width:738px;height:20px;background:linear-gradient(rgba(0,0,0,0),rgba(0,0,0,0.18))"></div>
</div>
<div style="left:1436px;top:130px;width:30px;height:550px;background:#2e2e2e"></div>
<svg style="position:absolute;left:1442px;top:138px;" width="17" height="14" viewBox="0 0 17 14"><polygon points="1,13 16,13 8.5,1" fill="#d8d8d8"/></svg>
<div style="left:1439px;top:161px;width:22px;height:313px;background:#5e5e5e;border-radius:4px"></div>
<svg style="position:absolute;left:1443px;top:657px;" width="16" height="14" viewBox="0 0 16 14"><polygon points="1,1 15,1 8,13" fill="#d8d8d8"/></svg>
<div style="left:820px;top:699px;width:392px;height:42px;background:#2c2c2c"></div>
<div style="left:694px;top:700px;width:43px;height:38px;background:#4a4a4a"></div>
<svg style="position:absolute;left:699px;top:705px;" width="34" height="30" viewBox="0 0 34 30"><rect x="1.5" y="1.5" width="30" height="27" rx="3" fill="#cfcfcf"/><path d="M6,8 L27,8 M6,13 L27,13 M6,18 L27,18 M6,23 L27,23" stroke="#6a6a6a" stroke-width="1.8"/></svg>
<svg style="position:absolute;left:743px;top:702px;" width="35" height="33" viewBox="0 0 35 33"><rect x="1" y="1" width="14" height="14" fill="#cfcfcf"/><rect x="19" y="1" width="14" height="14" fill="#cfcfcf"/><rect x="1" y="18" width="14" height="14" fill="#cfcfcf"/><rect x="19" y="18" width="14" height="14" fill="#cfcfcf"/><path d="M1,9 L33,9 M1,26 L33,26" stroke="#555" stroke-width="1.5"/></svg>
<svg style="position:absolute;left:787px;top:701px;" width="36" height="36" viewBox="0 0 36 36"><circle cx="19" cy="16" r="12" fill="none" stroke="#c8c8c8" stroke-width="4"/><path d="M10,25 L4,31" stroke="#c8c8c8" stroke-width="4.5" stroke-linecap="round"/></svg>
<svg style="position:absolute;left:1195px;top:712px;" width="16" height="13" viewBox="0 0 16 13"><polygon points="1,1 15,1 8,12" fill="#9a9a9a"/></svg>
<svg style="position:absolute;left:1232px;top:709px;" width="16" height="19" viewBox="0 0 16 19"><polygon points="14,1 14,18 1,9.5" fill="#cfcfcf"/></svg>
<div style="left:1256px;top:701px;width:38px;height:34px;background:#737373;border-radius:4px"></div>
<svg style="position:absolute;left:1445px;top:709px;" width="16" height="19" viewBox="0 0 16 19"><polygon points="2,1 2,18 15,9.5" fill="#e0e0e0"/></svg>
<div style="left:118px;top:763px;width:1375px;height:3px;background:#272727"></div>
<div style="left:740px;top:765px;width:127px;height:26px;background:#303030;box-shadow:inset -1px -1px 0 #262626, inset 1px 0 0 #262626"></div>
<svg style="position:absolute;left:794px;top:773px;" width="18" height="11" viewBox="0 0 18 11"><polygon points="1,1 17,1 9,10" fill="#9a9a9a"/></svg>
<svg style="position:absolute;left:150px;top:819px;" width="19" height="16" viewBox="0 0 19 16"><polygon points="1,1 18,1 9.5,15" fill="#b0b0b0"/></svg>
<div class="t " style="left:190px;top:816.66px;font-size:21.9px;color:#c9c9c9;">Source Browser Settings</div>
<div style="left:150px;top:864px;width:1308px;height:123px;background:#3a3a3a;box-shadow:inset 0 0 0 2px #242424"></div>
<div class="t " style="left:233px;top:915.79px;font-size:22.1px;color:#c9c9c9;">Double click to:</div>
<div style="left:385px;top:905px;width:362px;height:41px;background:#2f2f2f;box-shadow:inset 0 0 0 1px #444"></div>
<div class="t " style="left:404px;top:915.50px;font-size:22.45px;color:#d0d0d0;">Load clips into Source Monitor</div>
<svg style="position:absolute;left:729px;top:918px;" width="16" height="14" viewBox="0 0 16 14"><polygon points="1,1 15,1 8,13" fill="#c0c0c0"/></svg>
<div style="left:815px;top:891px;width:27px;height:29px;background:#333333;box-shadow:inset 0 0 0 1.5px #4a4a4a;border-radius:2px"></div>
<div style="left:815px;top:930px;width:27px;height:28px;background:#333333;box-shadow:inset 0 0 0 1.5px #4a4a4a;border-radius:2px"></div>
<svg style="position:absolute;left:815px;top:930px;" width="27" height="28" viewBox="0 0 27 28"><path d="M4,15 L10,22 L23,6" stroke="#e0e0e0" stroke-width="3.5" fill="none"/></svg>
<div class="t " style="left:852px;top:896.08px;font-size:22.35px;color:#cfcfcf;">Close Source Browser after Link or Import</div>
<div class="t " style="left:852px;top:934.33px;font-size:22.06px;color:#cfcfcf;">Clear Source Monitor Upon Closing Source Browser</div>
<svg style="position:absolute;left:141px;top:1022px;" width="32" height="32" viewBox="0 0 32 32"><circle cx="16" cy="16" r="14.2" fill="#1e1e1e" stroke="#6a6a6a" stroke-width="1.6"/><circle cx="16" cy="15.5" r="12" fill="#d8d8d8"/></svg>
<div class="t " style="left:190px;top:1027.78px;font-size:22.35px;color:#cfcfcf;">Link</div>
<svg style="position:absolute;left:267px;top:1022px;" width="32" height="32" viewBox="0 0 32 32"><circle cx="16" cy="16" r="14" fill="none" stroke="#555" stroke-width="2"/></svg>
<div class="t " style="left:315px;top:1026.38px;font-size:24px;color:#cfcfcf;">Import</div>
<div style="left:420px;top:1020px;width:34px;height:36px;background:#333333"></div>
<svg style="position:absolute;left:420px;top:1022px;" width="32" height="32" viewBox="0 0 32 32"><polygon points="16,2 20,6 26,6 26,12 30,16 26,20 26,26 20,26 16,30 12,26 6,26 6,20 2,16 6,12 6,6 12,6" fill="#d0d0d0"/><polygon points="16,11 21,16 16,21 11,16" fill="#2e2e2e"/></svg>
<div style="left:131px;top:1071px;width:1347px;height:142px;background:#3b3b3b;box-shadow:inset 0 0 0 2px #252525"></div>
<div style="left:118px;top:1213px;width:1375px;height:47px;background:#2d2d2d"></div>
<div class="t " style="left:780px;top:1253.38px;font-size:22px;color:#cfcfcf;">Target Bin:</div>
<div style="left:912px;top:1237px;width:385px;height:30px;background:#2e2e2e;box-shadow:inset 0 0 0 2px #4a4a4a"></div>
<div class="t " style="left:1060px;top:1251.38px;font-size:22px;color:#cfcfcf;">Media</div>
<div style="left:1318px;top:1237px;width:160px;height:30px;background:#2e2e2e;box-shadow:inset 0 0 0 2px #4a4a4a"></div>
<div class="t " style="left:1378px;top:1251.38px;font-size:22px;color:#cfcfcf;">Link</div>
<svg style="position:absolute;left:1274px;top:1250px;" width="16" height="12" viewBox="0 0 16 12"><polygon points="1,1 15,1 8,11" fill="#b0b0b0"/></svg>
</body></html>
